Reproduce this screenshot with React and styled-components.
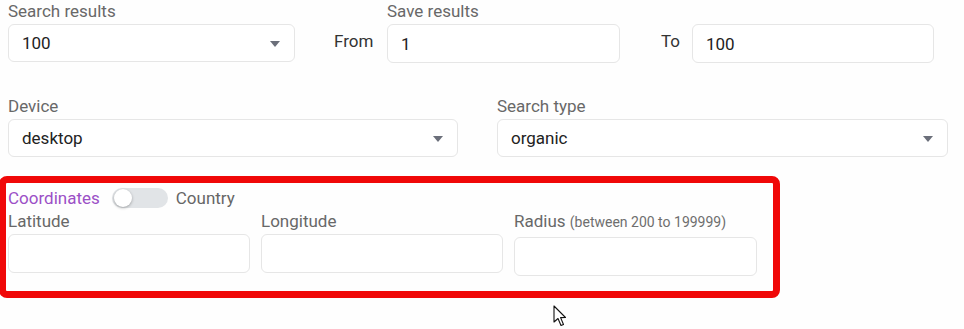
import styled, { createGlobalStyle } from "styled-components";

const GlobalStyle = createGlobalStyle`
  html, body {
    margin: 0;
    padding: 0;
    background: #fefefe;
    font-family: Roboto, "Liberation Sans", sans-serif;
  }
`;

export default function App() {
  return (
    <Page>
      <GlobalStyle />
      <TopRow>
        <Field width="287px">
          <Label>Search results</Label>
          <Select>
            <span>100</span>
            <Caret />
          </Select>
        </Field>
        <Inline width="92px" pad="39px">From</Inline>
        <Field width="233px">
          <Label>Save results</Label>
          <Input>1</Input>
        </Field>
        <Inline width="72px" pad="41px">To</Inline>
        <Field width="242px">
          <Label>&nbsp;</Label>
          <Input>100</Input>
        </Field>
      </TopRow>

      <SecondRow>
        <Field>
          <Label>Device</Label>
          <Select>
            <span>desktop</span>
            <Caret />
          </Select>
        </Field>
        <Field>
          <Label>Search type</Label>
          <Select>
            <span>organic</span>
            <Caret />
          </Select>
        </Field>
      </SecondRow>

      <Highlight>
        <ToggleRow>
          <ModeText active>Coordinates</ModeText>
          <Switch>
            <Knob />
          </Switch>
          <ModeText>Country</ModeText>
        </ToggleRow>
        <CoordGrid>
          <Field>
            <Label>Latitude</Label>
            <Input />
          </Field>
          <Field>
            <Label>Longitude</Label>
            <Input />
          </Field>
          <Field>
            <Label>
              Radius <Hint>(between 200 to 199999)</Hint>
            </Label>
            <Input shift="2px" />
          </Field>
        </CoordGrid>
      </Highlight>

      <Cursor viewBox="0 0 14 22" width="14" height="22">
        <path
          d="M1 1 L1 17 L5 13.5 L8 20.5 L10.5 19.5 L7.6 12.6 L12.5 12.5 Z"
          fill="#fff"
          stroke="#111"
          strokeWidth="1.1"
          strokeLinejoin="round"
        />
      </Cursor>
    </Page>
  );
}

const Page = styled.div`
  position: relative;
  width: 964px;
  height: 329px;
  box-sizing: border-box;
  padding: 1px 0 0 8px;
  overflow: hidden;
`;

const TopRow = styled.div`
  display: flex;
  align-items: flex-start;
`;

const SecondRow = styled.div`
  display: grid;
  grid-template-columns: 450px 451px;
  column-gap: 39px;
  margin-top: 33px;
`;

const Field = styled.div`
  display: flex;
  flex-direction: column;
  width: ${(p) => p.width || "auto"};
  min-width: 0;
`;

const Label = styled.div`
  font-size: 17px;
  line-height: 21px;
  color: #686868;
  margin-bottom: 2px;
  white-space: nowrap;
`;

const Hint = styled.span`
  font-size: 14px;
  color: #6e6e6e;
`;

const Box = styled.div`
  box-sizing: border-box;
  height: 38px;
  border: 1px solid #e6e6e6;
  border-radius: 6px;
  background: #fff;
  display: flex;
  align-items: center;
  padding: 0 13px;
  font-size: 17px;
  color: #222;
`;

const Select = styled(Box)`
  justify-content: space-between;
  padding-right: 14px;
`;

const Input = styled(Box)`
  margin-top: ${(p) => p.shift || "0"};
  height: 39px;
`;

const Caret = styled.span`
  width: 0;
  height: 0;
  border-left: 5px solid transparent;
  border-right: 5px solid transparent;
  border-top: 6px solid #6b6f7a;
  margin-top: 2px;
`;

const Inline = styled.div`
  width: ${(p) => p.width};
  box-sizing: border-box;
  padding-top: 30px;
  padding-left: ${(p) => p.pad};
  font-size: 17px;
  line-height: 20px;
  color: #333;
`;

const Highlight = styled.section`
  box-sizing: border-box;
  width: 781px;
  margin: 19px 0 0 -9px;
  border: 7px solid #f00808;
  border-radius: 8px;
  padding: 5px 16px 15px 2px;
`;

const ToggleRow = styled.div`
  display: flex;
  align-items: center;
  gap: 9px;
  height: 20px;
`;

const ModeText = styled.span`
  font-size: 17px;
  color: ${(p) => (p.active ? "#9b4fc6" : "#666")};
`;

const Switch = styled.div`
  position: relative;
  width: 56px;
  height: 20px;
  margin: 0 -1px 0 3px;
  border-radius: 10px;
  background: #e1e4e7;
`;

const Knob = styled.span`
  position: absolute;
  left: 2px;
  top: 1px;
  width: 18px;
  height: 18px;
  border-radius: 50%;
  background: #fff;
  box-shadow: 0 1px 3px rgba(0, 0, 0, 0.3);
`;

const CoordGrid = styled.div`
  display: grid;
  grid-template-columns: 242px 242px 243px;
  column-gap: 11px;
  margin-top: 3px;
`;

const Cursor = styled.svg`
  position: absolute;
  left: 553px;
  top: 305px;
`;
